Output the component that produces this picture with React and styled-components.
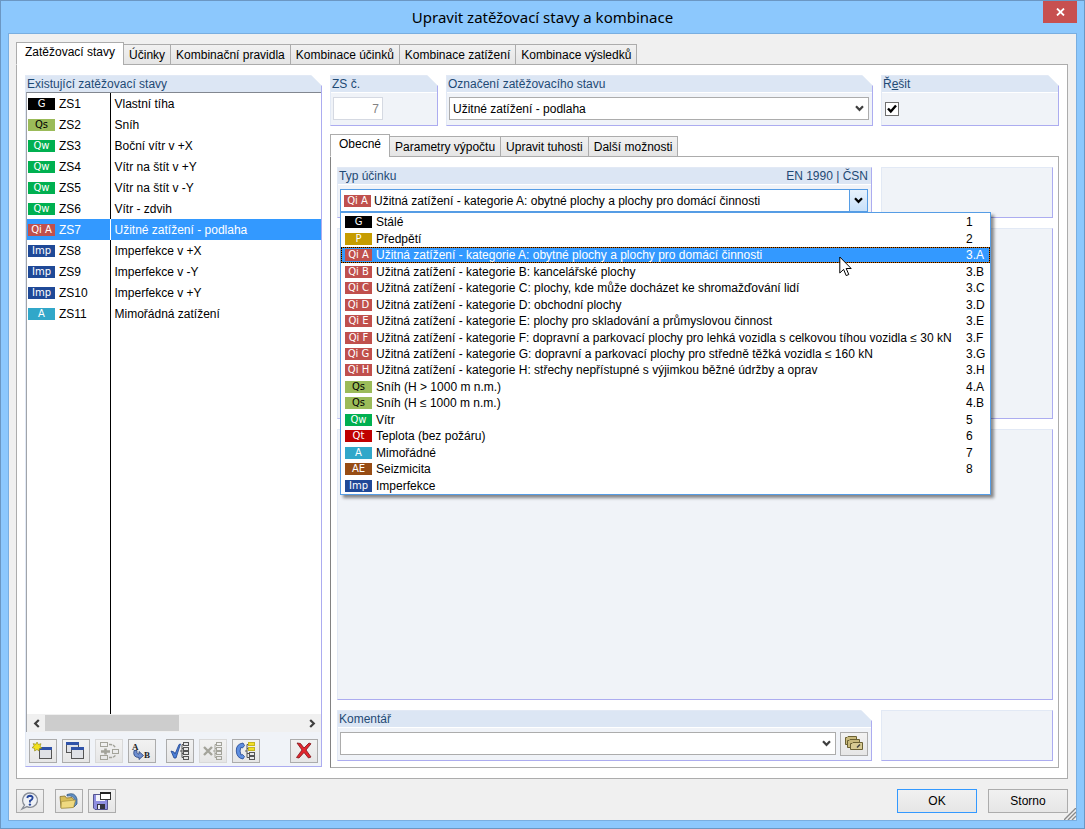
import React, { useState } from "react";
import styled, { createGlobalStyle, css } from "styled-components";

const tagColors = {
  G: "#000000",
  P: "#c69c00",
  Qs: "#9bbb59",
  Qw: "#00b050",
  Qt: "#c00000",
  A: "#31a7c9",
  AE: "#974c14",
  Imp: "#1f4997",
};

const tagColor = (tag) => tagColors[tag] || "#c0504d";

const mainTabs = [
  "Zatěžovací stavy",
  "Účinky",
  "Kombinační pravidla",
  "Kombinace účinků",
  "Kombinace zatížení",
  "Kombinace výsledků",
];

const subTabs = [
  "Obecné",
  "Parametry výpočtu",
  "Upravit tuhosti",
  "Další možnosti",
];

const loadCases = [
  { tag: "G", id: "ZS1", name: "Vlastní tíha" },
  { tag: "Qs", id: "ZS2", name: "Sníh" },
  { tag: "Qw", id: "ZS3", name: "Boční vítr v +X" },
  { tag: "Qw", id: "ZS4", name: "Vítr na štít v +Y" },
  { tag: "Qw", id: "ZS5", name: "Vítr na štít v -Y" },
  { tag: "Qw", id: "ZS6", name: "Vítr - zdvih" },
  { tag: "Qi A", id: "ZS7", name: "Užitné zatížení - podlaha" },
  { tag: "Imp", id: "ZS8", name: "Imperfekce v +X" },
  { tag: "Imp", id: "ZS9", name: "Imperfekce v -Y" },
  { tag: "Imp", id: "ZS10", name: "Imperfekce v +Y" },
  { tag: "A", id: "ZS11", name: "Mimořádná zatížení" },
];

const actionTypes = [
  { tag: "G", name: "Stálé", code: "1" },
  { tag: "P", name: "Předpětí", code: "2" },
  {
    tag: "Qi A",
    name: "Užitná zatížení - kategorie A: obytné plochy a plochy pro domácí činnosti",
    code: "3.A",
  },
  {
    tag: "Qi B",
    name: "Užitná zatížení - kategorie B: kancelářské plochy",
    code: "3.B",
  },
  {
    tag: "Qi C",
    name: "Užitná zatížení - kategorie C: plochy, kde může docházet ke shromažďování lidí",
    code: "3.C",
  },
  {
    tag: "Qi D",
    name: "Užitná zatížení - kategorie D: obchodní plochy",
    code: "3.D",
  },
  {
    tag: "Qi E",
    name: "Užitná zatížení - kategorie E: plochy pro skladování a průmyslovou činnost",
    code: "3.E",
  },
  {
    tag: "Qi F",
    name: "Užitná zatížení - kategorie F: dopravní a parkovací plochy pro lehká vozidla s celkovou tíhou vozidla ≤ 30 kN",
    code: "3.F",
  },
  {
    tag: "Qi G",
    name: "Užitná zatížení - kategorie G: dopravní a parkovací plochy pro středně těžká vozidla ≤ 160 kN",
    code: "3.G",
  },
  {
    tag: "Qi H",
    name: "Užitná zatížení - kategorie H: střechy nepřístupné s výjimkou běžné údržby a oprav",
    code: "3.H",
  },
  { tag: "Qs", name: "Sníh (H > 1000 m n.m.)", code: "4.A" },
  { tag: "Qs", name: "Sníh (H ≤ 1000 m n.m.)", code: "4.B" },
  { tag: "Qw", name: "Vítr", code: "5" },
  { tag: "Qt", name: "Teplota (bez požáru)", code: "6" },
  { tag: "A", name: "Mimořádné", code: "7" },
  { tag: "AE", name: "Seizmicita", code: "8" },
  { tag: "Imp", name: "Imperfekce", code: "" },
];

const Chevron = () => (
  <svg width="9" height="7" viewBox="0 0 9 7" aria-hidden="true">
    <path d="M1 1.2 L4.5 4.8 L8 1.2" fill="none" stroke="currentColor" strokeWidth="2.2" />
  </svg>
);

const icons = {
  create: (
    <>
      <rect x="7.5" y="6.5" width="12" height="10" fill="#dfe1e6" stroke="#555" />
      <rect x="7" y="5" width="13" height="3" fill="#2f52a8" />
      <path
        d="M5 0 L6.3 2.5 L9 1.7 L8 4.4 L10 6 L7.3 6.6 L7 9 L5 7.5 L2.6 9 L2.6 6.5 L0 5.6 L2.2 4 L1.2 1.6 L4 2.3 Z"
        fill="#f3e11c"
        stroke="#8d8410"
        strokeWidth="0.6"
      />
    </>
  ),
  copy: (
    <>
      <rect x="1.5" y="0.5" width="12" height="10" fill="#dfe1e6" stroke="#555" />
      <rect x="1" y="0" width="13" height="3" fill="#2f52a8" />
      <rect x="6.5" y="6.5" width="12" height="10" fill="#dfe1e6" stroke="#555" />
      <rect x="6" y="5" width="13" height="3" fill="#2f52a8" />
    </>
  ),
  combine: (
    <g fill="none" stroke="#a3a39a">
      <rect x="2.5" y="0.5" width="7" height="4" />
      <rect x="2.5" y="13.5" width="7" height="4" />
      <rect x="14.5" y="7.5" width="6" height="4" />
      <path d="M11 2.5 Q16 2 17.5 6 M11 15.5 Q16 16 17.5 13" strokeDasharray="3 1" strokeWidth="1.4" />
      <path d="M3 9.5 H12 M7.5 6.5 V12.5" strokeWidth="2.6" />
    </g>
  ),
  rename: (
    <>
      <text x="1" y="8" fontSize="9" fontWeight="bold" fontFamily="Liberation Serif, serif" fill="#222">
        A
      </text>
      <text x="13" y="16" fontSize="9" fontWeight="bold" fontFamily="Liberation Serif, serif" fill="#222">
        B
      </text>
      <path d="M3 8.5 Q1.5 15.5 8 15.5 V17.5 L12.5 13.5 L8 9.5 V12 Q5.5 12.5 6 8.5 Z" fill="#6f8fd0" stroke="#27427c" strokeWidth="0.8" />
    </>
  ),
  check: (
    <>
      <g fill="#e8e8e8" stroke="#555">
        <path d="M11 9 H13 M13 2.5 V15.5 M13 2.5 H15 M13 6.5 H15 M13 11.5 H15 M13 15.5 H15" />
        <rect x="14.5" y="0.5" width="5" height="3" />
        <rect x="14.5" y="5.5" width="5" height="3" />
        <rect x="14.5" y="9.5" width="5" height="3" />
        <rect x="14.5" y="14.5" width="5" height="3" />
      </g>
      <path d="M2 9 L5 10 L6 12 L10 2.5 L11.5 2 L7 16 L5 16 Z" fill="#4c7fd6" stroke="#1f4490" strokeWidth="0.8" />
    </>
  ),
  uncheck: (
    <g fill="none" stroke="#a3a39a">
      <path d="M11 9 H13 M13 2.5 V15.5 M13 2.5 H15 M13 6.5 H15 M13 11.5 H15 M13 15.5 H15" />
      <rect x="14.5" y="0.5" width="5" height="3" />
      <rect x="14.5" y="5.5" width="5" height="3" />
      <rect x="14.5" y="9.5" width="5" height="3" />
      <rect x="14.5" y="14.5" width="5" height="3" />
      <path d="M2 5 L10 13 M10 5 L2 13" strokeWidth="2.4" />
    </g>
  ),
  tree: (
    <>
      <path d="M10 9 H12 M12 2.5 V15.5 M12 2.5 H14 M12 6.5 H14 M12 11.5 H14 M12 15.5 H14" stroke="#555" fill="none" />
      <g fill="#f2df27" stroke="#c4b51f">
        <rect x="13.5" y="0.5" width="6" height="3" />
        <rect x="13.5" y="5.5" width="6" height="3" />
      </g>
      <g fill="#e8e8e8" stroke="#555">
        <rect x="14.5" y="10.5" width="5" height="3" />
        <rect x="14.5" y="14.5" width="5" height="3" />
      </g>
      <path
        d="M8 1 Q1 2 1.3 9 Q1.6 16 8 17 L9.5 14.5 L7.5 12.5 L6 13 Q4.2 9 5.8 5.4 L7.5 6 L9.5 3.5 Z"
        fill="#5f8fe0"
        stroke="#1f4490"
        strokeWidth="0.8"
      />
    </>
  ),
  remove: (
    <path
      d="M4 1 L7.5 1.5 L11 6 L16 1 L18 1.8 L13 8 L18 15 L15.5 16 L11 10.5 L6 16 L3.5 15.5 L9 8 Z"
      fill="#e3262e"
      stroke="#7d1116"
      strokeWidth="0.8"
    />
  ),
  help: (
    <>
      <path d="M11 1 A7.2 7.2 0 1 1 8 14.6 L3 17 L5.5 13 A7.2 7.2 0 0 1 11 1 Z" fill="#eef1f6" stroke="#888d96" strokeWidth="1.3" />
      <path
        d="M8.3 6 Q8.6 3.8 11 3.8 Q13.8 3.9 13.6 6 Q13.4 7.6 11 8.8 V10.4"
        fill="none"
        stroke="#27479c"
        strokeWidth="1.9"
      />
      <circle cx="10.9" cy="12.6" r="1.2" fill="#27479c" />
    </>
  ),
  open: (
    <>
      <path d="M9 2.5 Q17 -0.5 19 7 L19 12 L16 15 L17 8 Q15 3 9 4 Z" fill="#5f8fc4" stroke="#2c5078" strokeWidth="0.7" />
      <path d="M2 4.5 L7 4 L8.5 6 L14 5.5 L16 8 L15 15.5 L3 16 Z" fill="#d9bd57" stroke="#85702a" strokeWidth="0.8" />
      <path d="M3.5 9.5 L17.5 8 L15.5 15.5 L3 16.2 Z" fill="#efd980" stroke="#a08b3c" strokeWidth="0.6" />
    </>
  ),
  save: (
    <>
      <path d="M2.5 2.5 H16.5 V17.5 H4 L2.5 16 Z" fill="#8e8ee0" stroke="#55558f" />
      <rect x="5" y="3" width="9" height="6" fill="#f4f4fa" />
      <rect x="6" y="12" width="8" height="5" fill="#34343f" />
      <rect x="7" y="13" width="2" height="4" fill="#e8e8f4" />
      <rect x="9.5" y="1.5" width="10" height="6" fill="#ffffff" stroke="#333" />
      <rect x="9" y="0" width="11" height="2" fill="#222" />
    </>
  ),
  cards: (
    <g fill="#c9ba7d" stroke="#6b6133">
      <path d="M2.5 2.5 H4 L5 1.5 H13.5 V9.5 H2.5 Z" />
      <path d="M4.5 5.5 H6 L7 4.5 H16.5 V12.5 H4.5 Z" />
      <path d="M7.5 8.5 H9 L10 7.5 H19.5 V14.5 H7.5 Z" fill="#d8cb93" />
      <path d="M14 12.5 L17 9.5" stroke="#444" strokeWidth="1.6" />
    </g>
  ),
};

const ToolButton = ({ icon, label, disabled }) => (
  <IconButton type="button" aria-label={label} disabled={disabled}>
    <svg width="22" height="18" viewBox="0 0 22 18" aria-hidden="true">
      {icons[icon]}
    </svg>
  </IconButton>
);

const App = () => {
  const [selected, setSelected] = useState("ZS7");
  const [type, setType] = useState("Qi A");
  const [solve, setSolve] = useState(true);

  return (
    <>
      <GlobalStyle />
      <Window>
        <TitleBar>
          <h1>Upravit zatěžovací stavy a kombinace</h1>
          <CloseButton type="button" aria-label="Zavřít">
            <svg width="9" height="8" viewBox="0 0 9 8" aria-hidden="true">
              <path d="M1 0.5 L8 7.5 M8 0.5 L1 7.5" stroke="#fff" strokeWidth="1.8" />
            </svg>
          </CloseButton>
        </TitleBar>
        <Client>
          <TabRow role="tablist">
            {mainTabs.map((tab, i) => (
              <Tab key={tab} type="button" role="tab" $active={i === 0}>
                {tab}
              </Tab>
            ))}
          </TabRow>
          <MainPanel>
            <CaseGroup>
              <GroupTitle>Existující zatěžovací stavy</GroupTitle>
              <ListBox>
                <CaseTable>
                  <tbody>
                    {loadCases.map((item) => (
                      <CaseRow
                        key={item.id}
                        $selected={item.id === selected}
                        onClick={() => setSelected(item.id)}
                      >
                        <td className="tag">
                          <Tag $tag={item.tag}>{item.tag}</Tag>
                        </td>
                        <td className="id">{item.id}</td>
                        <td className="name">{item.name}</td>
                      </CaseRow>
                    ))}
                    <tr>
                      <td className="id" colSpan={2}></td>
                      <td></td>
                    </tr>
                  </tbody>
                </CaseTable>
              </ListBox>
              <ScrollBar>
                <ScrollArrow type="button" aria-label="Vlevo" $turn="90deg">
                  <Chevron />
                </ScrollArrow>
                <ScrollTrack>
                  <ScrollThumb />
                </ScrollTrack>
                <ScrollArrow type="button" aria-label="Vpravo" $turn="-90deg">
                  <Chevron />
                </ScrollArrow>
              </ScrollBar>
              <Toolbar>
                <ToolSet>
                  <ToolButton icon="create" label="Nový" />
                  <ToolButton icon="copy" label="Kopírovat" />
                  <ToolButton icon="combine" label="Sloučit" disabled />
                  <ToolButton icon="rename" label="Přečíslovat" />
                </ToolSet>
                <ToolSet>
                  <ToolButton icon="check" label="Vybrat vše" />
                  <ToolButton icon="uncheck" label="Zrušit výběr" disabled />
                  <ToolButton icon="tree" label="Obrátit výběr" />
                </ToolSet>
                <Spacer />
                <ToolButton icon="remove" label="Smazat" />
              </Toolbar>
            </CaseGroup>

            <Details>
              <TopRow>
                <Group $width="108px" $cut>
                  <GroupTitle as="label" htmlFor="case-number">
                    ZS č.
                  </GroupTitle>
                  <GroupBody>
                    <NumberInput id="case-number" value="7" disabled />
                  </GroupBody>
                </Group>
                <Group $cut>
                  <GroupTitle as="label" htmlFor="case-name">
                    Označení zatěžovacího stavu
                  </GroupTitle>
                  <GroupBody>
                    <Combo>
                      <select id="case-name">
                        <option>Užitné zatížení - podlaha</option>
                      </select>
                      <ComboArrow>
                        <Chevron />
                      </ComboArrow>
                    </Combo>
                  </GroupBody>
                </Group>
                <Group $width="178px" $cut>
                  <GroupTitle as="label" htmlFor="solve">
                    <span>
                      Ř<u>e</u>šit
                    </span>
                  </GroupTitle>
                  <GroupBody>
                    <CheckBox
                      id="solve"
                      type="checkbox"
                      checked={solve}
                      onChange={(e) => setSolve(e.target.checked)}
                    />
                  </GroupBody>
                </Group>
              </TopRow>

              <TabRow role="tablist">
                {subTabs.map((tab, i) => (
                  <Tab key={tab} type="button" role="tab" $active={i === 0}>
                    {tab}
                  </Tab>
                ))}
              </TabRow>
              <SubPanel>
                <PanelRow>
                  <Group>
                    <GroupTitle as="label" htmlFor="action-type">
                      <span>Typ účinku</span>
                      <span>EN 1990 | ČSN</span>
                    </GroupTitle>
                    <GroupBody>
                      <Combo $open>
                        <Tag $tag={type}>{type}</Tag>
                        <select
                          id="action-type"
                          value={type}
                          onChange={(e) => setType(e.target.value)}
                        >
                          {actionTypes.map((item) => (
                            <option key={item.name} value={item.tag}>
                              {item.name}
                            </option>
                          ))}
                        </select>
                        <ComboArrow $open>
                          <Chevron />
                        </ComboArrow>
                        <Menu role="listbox" aria-label="Typ účinku">
                          {actionTypes.map((item) => (
                            <MenuItem
                              key={item.name}
                              role="option"
                              $selected={item.tag === type}
                              onClick={() => setType(item.tag)}
                            >
                              <Tag $tag={item.tag}>{item.tag}</Tag>
                              <span className="name">{item.name}</span>
                              <span className="code">{item.code}</span>
                            </MenuItem>
                          ))}
                          <Pointer width="13" height="21" viewBox="0 0 13 21" aria-hidden="true">
                            <path
                              d="M0.8 1 V17 L4.6 13.4 L7.2 19.6 L9.8 18.5 L7.2 12.5 H12.2 Z"
                              fill="#fff"
                              stroke="#000"
                              strokeWidth="1"
                            />
                          </Pointer>
                        </Menu>
                      </Combo>
                    </GroupBody>
                  </Group>
                  <Group $width="172px" />
                </PanelRow>
                <PanelRow $grow={19}>
                  <Group $cut />
                  <Group $width="172px" />
                </PanelRow>
                <PanelRow $grow={27}>
                  <Group />
                </PanelRow>
                <PanelRow>
                  <Group $cut>
                    <GroupTitle as="label" htmlFor="comment">
                      Komentář
                    </GroupTitle>
                    <GroupBody>
                      <Combo>
                        <select id="comment">
                          <option></option>
                        </select>
                        <ComboArrow>
                          <Chevron />
                        </ComboArrow>
                      </Combo>
                      <ToolButton icon="cards" label="Vybrat komentář" />
                    </GroupBody>
                  </Group>
                  <Group $width="172px" />
                </PanelRow>
              </SubPanel>
            </Details>
          </MainPanel>

          <Footer>
            <ToolButton icon="help" label="Nápověda" />
            <ToolSet>
              <ToolButton icon="open" label="Otevřít" />
              <ToolButton icon="save" label="Uložit" />
            </ToolSet>
            <Spacer />
            <DialogButton type="button" $primary>
              OK
            </DialogButton>
            <DialogButton type="button">Storno</DialogButton>
          </Footer>
          <Grip width="12" height="12" viewBox="0 0 12 12" aria-hidden="true">
            <path d="M0 12 L12 0 M4 12 L12 4 M8 12 L12 8" stroke="#8a8a8a" strokeWidth="1.4" />
          </Grip>
        </Client>
      </Window>
    </>
  );
};

const GlobalStyle = createGlobalStyle`
  * {
    box-sizing: border-box;
  }
  body {
    margin: 0;
    color: #000;
    font-family: "Liberation Sans", Arial, sans-serif;
    font-size: 12px;
    line-height: 16px;
  }
  button, input, select {
    margin: 0;
    padding: 0;
    color: inherit;
    font: inherit;
  }
`;

const Window = styled.div`
  display: flex;
  flex-direction: column;
  min-height: 100vh;
  padding: 0 7px 7px;
  border: 1px solid #6b97c3;
  background-color: #8cc8fd;
`;

const TitleBar = styled.header`
  position: relative;
  height: 32px;

  h1 {
    margin: 0;
    font-family: "Noto Sans", "Open Sans", sans-serif;
    font-size: 15px;
    font-weight: normal;
    line-height: 32px;
    text-align: center;
  }
`;

const CloseButton = styled.button`
  position: absolute;
  top: 0;
  right: 0;
  display: flex;
  align-items: center;
  justify-content: center;
  width: 34px;
  height: 22px;
  border: 0;
  background-color: #c75050;
`;

const Client = styled.main`
  position: relative;
  display: flex;
  flex: 1;
  flex-direction: column;
  padding: 8px 8px 0 7px;
  border: 1px solid #79aee0;
  background-color: #f0f0f0;
`;

const TabRow = styled.div`
  display: flex;
  align-items: flex-end;
  height: 23px;
  margin-bottom: -1px;
`;

const Tab = styled.button`
  position: relative;
  height: 21px;
  margin-right: -1px;
  padding: 0 5px;
  border: 1px solid #acacac;
  background-image: linear-gradient(#f1f1f1, #e5e5e5);
  white-space: nowrap;

  ${({ $active }) =>
    $active &&
    css`
      height: 23px;
      padding: 0 8px 3px;
      border-bottom-color: #fff;
      background: #fff;
    `}
`;

const MainPanel = styled.section`
  display: flex;
  flex: 1;
  gap: 8px;
  padding: 10px 8px;
  border: 1px solid #acacac;
  background-color: #fff;
`;

const Group = styled.div`
  flex: ${({ $width }) => ($width ? `0 0 ${$width}` : "1 1 0")};
  min-width: 0;
  min-height: 51px;
  border: 1px solid #e2e9f5;
  border-right-color: #acacf0;
  border-bottom-color: #acacf0;
  background-color: #f0f3f8;
  ${({ $cut }) =>
    $cut &&
    css`
      clip-path: polygon(0 0, calc(100% - 11px) 0, 100% 11px, 100% 100%, 0 100%);
    `}
`;

const CaseGroup = styled(Group).attrs({ $width: "297px", $cut: true })`
  display: flex;
  flex-direction: column;
  margin-bottom: 1px;
`;

const GroupTitle = styled.div`
  display: flex;
  justify-content: space-between;
  height: 17px;
  padding: 0 3px 0 1px;
  border-bottom: 1px solid #fff;
  background-color: #dce6f4;
  color: #1f4a75;
`;

const GroupBody = styled.div`
  display: flex;
  align-items: center;
  gap: 4px;
  height: 31px;
  padding: 0 3px 0 2px;
`;

const ListBox = styled.div`
  flex: 1;
  margin-top: -1px;
  border-top: 1px solid #828790;
  border-left: 1px solid #a0a4aa;
  background-color: #fff;
`;

const CaseTable = styled.table`
  width: 100%;
  height: 100%;
  border-collapse: collapse;

  td {
    padding: 0;
  }
  .tag {
    width: 32px;
    padding-left: 1px;
  }
  .id {
    width: 51px;
    border-right: 1px solid #000;
  }
  .name {
    padding-left: 4px;
  }
`;

const CaseRow = styled.tr`
  height: 21px;

  ${({ $selected }) =>
    $selected &&
    css`
      background-color: #3399ff;
      color: #fff;

      .id {
        border-right-color: #fff;
      }
    `}
`;

const Tag = styled.span`
  display: block;
  flex: 0 0 27px;
  width: 27px;
  height: 12px;
  background-color: ${({ $tag }) => tagColor($tag)};
  color: ${({ $tag }) => ($tag === "Qs" ? "#000" : "#fff")};
  font-family: "DejaVu Sans", Verdana, sans-serif;
  font-size: 10px;
  line-height: 12px;
  text-align: center;
  white-space: nowrap;
`;

const ScrollBar = styled.div`
  display: flex;
  height: 18px;
  border-left: 1px solid #a0a4aa;
  background-color: #f0f0f0;
`;

const ScrollArrow = styled.button`
  width: 18px;
  border: 0;
  background: none;
  color: #404040;

  svg {
    transform: rotate(${({ $turn }) => $turn});
  }
`;

const ScrollTrack = styled.div`
  flex: 1;
  padding: 1px 0;
`;

const ScrollThumb = styled.div`
  width: 52%;
  height: 16px;
  background-color: #cdcdcd;
`;

const Toolbar = styled.div`
  display: flex;
  gap: 10px;
  padding: 7px 3px 3px;
`;

const ToolSet = styled.div`
  display: flex;
  gap: 5px;
`;

const Spacer = styled.div`
  flex: 1;
`;

const IconButton = styled.button`
  display: flex;
  flex: 0 0 28px;
  align-items: center;
  justify-content: center;
  height: 24px;
  border: 1px solid ${({ disabled }) => (disabled ? "#d9d9d9" : "#acacac")};
  background-image: linear-gradient(#f2f2f2, #e6e6e6);

  svg {
    overflow: visible;
  }
`;

const Details = styled.div`
  display: flex;
  flex: 1;
  flex-direction: column;
  min-width: 0;
`;

const TopRow = styled.div`
  display: flex;
  gap: 8px;
  margin-bottom: 8px;
`;

const NumberInput = styled.input`
  width: 50px;
  height: 23px;
  padding-right: 3px;
  border: 1px solid #d5d9e2;
  background-color: #fff;
  color: #838383;
  text-align: right;
`;

const Combo = styled.div`
  position: relative;
  display: flex;
  flex: 1;
  align-items: center;
  min-width: 0;
  height: 23px;
  padding-left: 3px;
  border: 1px solid ${({ $open }) => ($open ? "#569de5" : "#acacac")};
  background-color: #fff;

  select {
    flex: 1;
    min-width: 0;
    height: 21px;
    border: 0;
    background: none;
    appearance: none;
    outline: none;
  }
  ${Tag} + select {
    padding-left: 3px;
  }
`;

const ComboArrow = styled.span`
  display: flex;
  align-items: center;
  justify-content: center;
  width: 18px;
  height: 21px;
  color: #404040;
  pointer-events: none;

  ${({ $open }) =>
    $open &&
    css`
      border-left: 1px solid #569de5;
      background-image: linear-gradient(#e8f2fc, #c8e1fa);
      color: #000;
    `}
`;

const CheckBox = styled.input`
  width: 14px;
  height: 14px;
  margin-left: 1px;
  border: 1px solid #707070;
  background: #fff
    url("data:image/svg+xml,%3Csvg xmlns='http://www.w3.org/2000/svg' viewBox='0 0 12 12'%3E%3Cpath d='M2 5.5 L4.8 8.5 L10 2.5' fill='none' stroke='%23000' stroke-width='2.4'/%3E%3C/svg%3E");
  appearance: none;

  &:not(:checked) {
    background-image: none;
  }
`;

const SubPanel = styled.div`
  display: flex;
  flex: 1;
  flex-direction: column;
  gap: 10px;
  padding: 10px 5px 6px 6px;
  border: 1px solid #acacac;
  border-left-color: #828282;
`;

const PanelRow = styled.div`
  display: flex;
  flex: ${({ $grow }) => ($grow ? `${$grow} 1 0` : "0 0 auto")};
  gap: 9px;
`;

/* the open list hangs from the lower edge of its combo box */
const Menu = styled.ul`
  position: absolute;
  z-index: 2;
  top: 22px;
  left: -1px;
  display: grid;
  grid-auto-rows: 1fr;
  width: 651px;
  height: 283px;
  margin: 0;
  padding: 1px 0 0;
  border: 1px solid #569de5;
  background-color: #fff;
  box-shadow: 3px 3px 3px rgba(0, 0, 0, 0.45);
  list-style: none;
`;

const MenuItem = styled.li`
  display: flex;
  align-items: center;
  min-height: 0;
  padding-left: 3px;
  border: 1px solid transparent;
  line-height: 14px;
  white-space: nowrap;

  .name {
    flex: 1;
    padding-left: 4px;
  }
  .code {
    width: 23px;
  }

  ${({ $selected }) =>
    $selected &&
    css`
      border: 1px dotted #000;
      background: linear-gradient(#3399ff, #3399ff) padding-box, #cc6600 border-box;
      color: #fff;
    `}
`;

const Pointer = styled.svg`
  position: absolute;
  top: 43px;
  left: 498px;
`;

const Footer = styled.footer`
  display: flex;
  gap: 11px;
  padding: 10px 0 7px;
`;

const DialogButton = styled.button`
  width: 80px;
  height: 24px;
  border: 1px solid ${({ $primary }) => ($primary ? "#3399ff" : "#acacac")};
  background-image: linear-gradient(#f1f1f1, #e6e6e6);
`;

const Grip = styled.svg`
  position: absolute;
  right: 0;
  bottom: 0;
`;

export default App;
